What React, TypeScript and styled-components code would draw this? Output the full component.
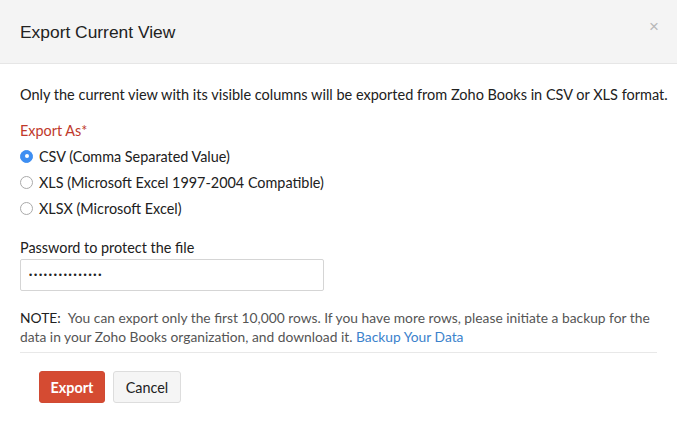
import React, { useState } from "react";
import styled, { createGlobalStyle } from "styled-components";

const GlobalStyle = createGlobalStyle`
  html, body {
    margin: 0;
    padding: 0;
    background: #ffffff;
  }
  body {
    font-family: Lato, "Open Sans", sans-serif;
    color: #212529;
  }
  * {
    box-sizing: border-box;
  }
`;

const Modal = styled.div`
  width: 677px;
  height: 423px;
  background: #fff;
  display: flex;
  flex-direction: column;
`;

const Header = styled.div`
  height: 64px;
  flex-shrink: 0;
  background: #f4f4f4;
  border-bottom: 1px solid #e6e6e6;
  display: flex;
  align-items: center;
  justify-content: space-between;
  padding: 0 18px 0 20px;
`;

const Title = styled.h4`
  margin: 0;
  font-family: "Liberation Sans", Arial, sans-serif;
  font-weight: 400;
  font-size: 17.4px;
  color: #222;
  padding-top: 1px;
`;

const Close = styled.button`
  border: 0;
  background: none;
  padding: 0;
  margin-top: -10px;
  font-family: "Liberation Sans", Arial, sans-serif;
  font-size: 17px;
  line-height: 1;
  color: #b8b8b8;
  cursor: pointer;
`;

const Body = styled.div`
  padding: 22px 20px 0 20px;
  display: flex;
  flex-direction: column;
`;

const Intro = styled.p`
  margin: 0 0 18px 0;
  font-size: 14.5px;
  line-height: 18px;
  color: #212121;
  white-space: nowrap;
`;

const Label = styled.div<{ required?: boolean; spacing?: number }>`
  font-size: 14.4px;
  line-height: 18px;
  color: ${({ required }) => (required ? "#c0392b" : "#212121")};
  margin-bottom: ${({ spacing }) => spacing ?? 8}px;
`;

const RadioList = styled.div`
  display: flex;
  flex-direction: column;
  gap: 8px;
  margin-bottom: 22px;
`;

const RadioRow = styled.label`
  display: flex;
  align-items: center;
  gap: 6px;
  height: 18px;
  font-size: 14.4px;
  color: #212121;
  cursor: pointer;
`;

const RadioDot = styled.span<{ checked: boolean }>`
  width: 13px;
  height: 13px;
  border-radius: 50%;
  flex-shrink: 0;
  background: ${({ checked }) => (checked ? "#3d8ef2" : "#fff")};
  border: 1px solid ${({ checked }) => (checked ? "#3d8ef2" : "#aaaaaa")};
  display: flex;
  align-items: center;
  justify-content: center;

  &::after {
    content: "";
    width: 4px;
    height: 4px;
    border-radius: 50%;
    background: #fff;
    display: ${({ checked }) => (checked ? "block" : "none")};
  }
`;

const PasswordInput = styled.input`
  width: 304px;
  height: 32px;
  border: 1px solid #d5d5d5;
  border-radius: 2px;
  padding: 0 8px;
  font-family: "Liberation Sans", Arial, sans-serif;
  font-size: 9px;
  letter-spacing: 1.8px;
  color: #222;
  outline: none;
  margin-bottom: 17px;
`;

const Note = styled.p`
  margin: 0;
  width: 637px;
  font-size: 13.8px;
  line-height: 19px;
  color: #555;
  padding-bottom: 6px;
  border-bottom: 1px solid #e8e8e8;
`;

const NoteTag = styled.span`
  color: #212121;
  margin-right: 4px;
`;

const BackupLink = styled.a`
  color: #3b82cc;
  text-decoration: none;
`;

const Footer = styled.div`
  display: flex;
  gap: 8px;
  padding: 18px 0 0 39px;
`;

const Button = styled.button<{ primary?: boolean }>`
  height: 32px;
  min-width: ${({ primary }) => (primary ? 66 : 68)}px;
  padding: 0 10px;
  border-radius: 3px;
  font-family: Lato, "Open Sans", sans-serif;
  font-size: 14.4px;
  cursor: pointer;
  border: 1px solid ${({ primary }) => (primary ? "#d04a33" : "#dddddd")};
  background: ${({ primary }) => (primary ? "#d54b32" : "#f5f5f5")};
  color: ${({ primary }) => (primary ? "#ffffff" : "#222222")};
  font-weight: ${({ primary }) => (primary ? 700 : 400)};
`;

const formats = [
  { id: "csv", label: "CSV (Comma Separated Value)" },
  { id: "xls", label: "XLS (Microsoft Excel 1997-2004 Compatible)" },
  { id: "xlsx", label: "XLSX (Microsoft Excel)" },
];

const App: React.FunctionComponent = () => {
  const [format, setFormat] = useState("csv");

  return (
    <>
      <GlobalStyle />
      <Modal>
        <Header>
          <Title>Export Current View</Title>
          <Close title="Close">×</Close>
        </Header>
        <Body>
          <Intro>
            Only the current view with its visible columns will be exported from
            Zoho Books in CSV or XLS format.
          </Intro>
          <Label required spacing={7}>
            Export As*
          </Label>
          <RadioList>
            {formats.map((item) => (
              <RadioRow key={item.id} onClick={() => setFormat(item.id)}>
                <RadioDot checked={format === item.id} />
                <span>{item.label}</span>
              </RadioRow>
            ))}
          </RadioList>
          <Label spacing={2}>Password to protect the file</Label>
          <PasswordInput type="password" defaultValue="123456789012345" />
          <Note>
            <NoteTag>NOTE:</NoteTag> You can export only the first 10,000 rows.
            If you have more rows, please initiate a backup for the data in your
            Zoho Books organization, and download it.{" "}
            <BackupLink href="#">Backup Your Data</BackupLink>
          </Note>
        </Body>
        <Footer>
          <Button primary>Export</Button>
          <Button>Cancel</Button>
        </Footer>
      </Modal>
    </>
  );
};

export default App;
